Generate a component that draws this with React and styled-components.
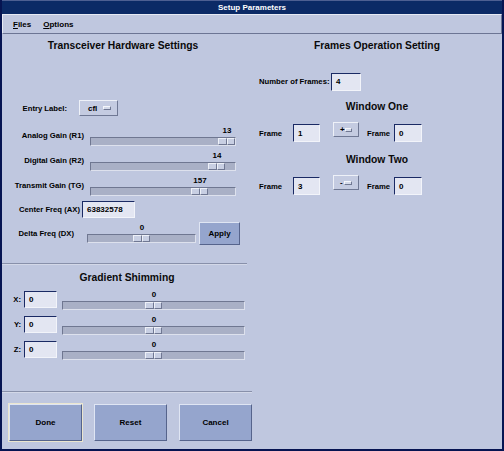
import React from "react";
import styled, { createGlobalStyle } from "styled-components";

const Global = createGlobalStyle`
  html, body { margin: 0; padding: 0; background: #bfc7df; }
  * { box-sizing: border-box; }
  body { font-family: "Liberation Sans", Arial, sans-serif; }
`;

const Window = styled.div`
  width: 504px;
  height: 451px;
  display: flex;
  flex-direction: column;
  background: #bfc7df;
  border: 2px solid #061452;
  border-top: none;
  overflow: hidden;
`;

const TitleBar = styled.div`
  height: 14px;
  flex: none;
  background: #0b2a66;
  border-top: 1px solid #4d5f92;
  color: #fff;
  font-size: 8px;
  font-weight: bold;
  line-height: 13px;
  text-align: center;
`;

const MenuBar = styled.div`
  height: 20px;
  flex: none;
  display: flex;
  align-items: center;
  gap: 12px;
  padding-left: 10px;
  border-top: 1px solid #e6eaf4;
  border-left: 1px solid #e6eaf4;
  border-bottom: 1px solid #6c7594;
  border-right: 1px solid #6c7594;
`;

const MenuItem = styled.span`
  font-size: 8px;
  font-weight: bold;
  color: #000;
`;

const Mnemonic = styled.span`
  text-decoration: underline;
`;

const Body = styled.div`
  flex: 1;
  display: flex;
`;

const Column = styled.div`
  width: 250px;
  flex: none;
  display: flex;
  flex-direction: column;
`;

const Section = styled.div`
  height: ${(p) => p.$h}px;
  flex: none;
  display: flex;
  flex-direction: column;
`;

const Heading = styled.div`
  margin-top: ${(p) => p.$mt || 0}px;
  padding-right: ${(p) => p.$pr || 0}px;
  font-size: 10.3px;
  font-weight: bold;
  line-height: 13px;
  text-align: center;
  color: #0a0a0a;
`;

const Row = styled.div`
  height: ${(p) => p.$h}px;
  margin-top: ${(p) => p.$mt || 0}px;
  padding-left: ${(p) => p.$pl || 0}px;
  flex: none;
  display: flex;
  align-items: center;
`;

const Label = styled.span`
  width: ${(p) => (p.$w ? `${p.$w}px` : "auto")};
  margin-right: ${(p) => p.$gap || 0}px;
  flex: none;
  text-align: ${(p) => (p.$w ? "right" : "left")};
  font-size: 7.7px;
  font-weight: bold;
  color: #000;
  white-space: nowrap;
`;

const Entry = styled.div`
  width: ${(p) => p.$w}px;
  height: ${(p) => p.$h || 17}px;
  margin-right: ${(p) => p.$gap || 0}px;
  flex: none;
  display: flex;
  align-items: center;
  padding-left: 4px;
  background: #e3e6f2;
  border-top: 1px solid #1a2a64;
  border-left: 1px solid #1a2a64;
  border-bottom: 1px solid #f2f4fa;
  border-right: 1px solid #f2f4fa;
  font-size: 8px;
  font-weight: bold;
  color: #000;
`;

const OptionMenu = styled.div`
  width: ${(p) => p.$w}px;
  height: ${(p) => p.$h}px;
  margin-right: ${(p) => p.$gap || 0}px;
  align-self: ${(p) => (p.$top ? "flex-start" : "center")};
  margin-top: ${(p) => p.$mt || 0}px;
  flex: none;
  display: flex;
  align-items: center;
  justify-content: space-between;
  padding: 0 6px 0 ${(p) => p.$pl || 8}px;
  background: #c4cbe1;
  border-top: 1px solid #eef1f8;
  border-left: 1px solid #eef1f8;
  border-bottom: 1px solid #6f7894;
  border-right: 1px solid #6f7894;
  font-size: 8px;
  font-weight: bold;
  color: #000;
`;

const Indicator = styled.span`
  width: 8px;
  height: 4px;
  background: #d4daea;
  border-top: 1px solid #f4f6fb;
  border-left: 1px solid #f4f6fb;
  border-bottom: 1px solid #707893;
  border-right: 1px solid #707893;
`;

const ScaleWrap = styled.div`
  width: ${(p) => p.$w}px;
  flex: none;
  display: flex;
  flex-direction: column;
`;

const ScaleValue = styled.div`
  position: relative;
  height: 9px;
  margin-bottom: 2px;
`;

const ValueText = styled.span`
  position: absolute;
  top: 0;
  transform: translateX(-50%);
  font-size: 8px;
  font-weight: bold;
  line-height: 9px;
  color: #000;
`;

const Trough = styled.div`
  position: relative;
  height: 9px;
  background: #a9b0c6;
  border-top: 1px solid #6f7791;
  border-left: 1px solid #6f7791;
  border-bottom: 1px solid #dde1ed;
  border-right: 1px solid #dde1ed;
`;

const Thumb = styled.div`
  position: absolute;
  top: 0;
  display: flex;
  width: 17px;
  height: 7px;
`;

const ThumbHalf = styled.span`
  flex: 1;
  background: #c8cfe3;
  border-top: 1px solid #eef1f8;
  border-left: 1px solid #eef1f8;
  border-bottom: 1px solid #6f7792;
  border-right: 1px solid #6f7792;
`;

const Divider = styled.div`
  width: ${(p) => p.$w}px;
  height: 2px;
  flex: none;
  border-top: 1px solid #8890aa;
  border-bottom: 1px solid #d3d8e8;
`;

const ButtonRow = styled.div`
  display: flex;
  gap: 12px;
  padding: 11px 0 0 7px;
`;

const PushButton = styled.button`
  width: ${(p) => p.$w}px;
  height: ${(p) => p.$h}px;
  margin-left: ${(p) => p.$ml || 0}px;
  flex: none;
  padding: 0;
  background: #95a5cd;
  border-top: 1px solid #dfe5f3;
  border-left: 1px solid #dfe5f3;
  border-bottom: 1px solid #56648c;
  border-right: 1px solid #56648c;
  outline: ${(p) => (p.$default ? "1px solid #ebe6cf" : "none")};
  font-family: "Liberation Sans", Arial, sans-serif;
  font-size: 8px;
  font-weight: bold;
  color: #000;
`;

function Scale({ width, value, at }) {
  return (
    <ScaleWrap $w={width}>
      <ScaleValue>
        <ValueText style={{ left: at + 10 }}>{value}</ValueText>
      </ScaleValue>
      <Trough>
        <Thumb style={{ left: at }}>
          <ThumbHalf />
          <ThumbHalf />
        </Thumb>
      </Trough>
    </ScaleWrap>
  );
}

const gains = [
  { label: "Analog Gain (R1)", value: 13, at: 127, mt: 3 },
  { label: "Digital Gain (R2)", value: 14, at: 117 },
  { label: "Transmit Gain (TG)", value: 157, at: 100 },
];

const shims = ["X:", "Y:", "Z:"];

function FrameRow({ first, op, last, mt }) {
  return (
    <Row $h={18} $mt={mt} $pl={7}>
      <Label $w={23} $gap={11}>Frame</Label>
      <Entry $w={27} $h={18} $gap={13}>{first}</Entry>
      <OptionMenu $w={26} $h={15} $gap={8} $top $mt={-2} $pl={6}>
        {op}
        <Indicator />
      </OptionMenu>
      <Label $w={22} $gap={5}>Frame</Label>
      <Entry $w={28} $h={18}>{last}</Entry>
    </Row>
  );
}

export default function App() {
  return (
    <>
      <Global />
      <Window>
        <TitleBar>Setup Parameters</TitleBar>
        <MenuBar>
          <MenuItem>
            <Mnemonic>F</Mnemonic>iles
          </MenuItem>
          <MenuItem>
            <Mnemonic>O</Mnemonic>ptions
          </MenuItem>
        </MenuBar>
        <Body>
          <Column>
            <Section $h={229}>
              <Heading $mt={5} $pr={8}>Transceiver Hardware Settings</Heading>
              <Row $h={24} $mt={44}>
                <Label $w={65} $gap={12}>Entry Label:</Label>
                <OptionMenu $w={39} $h={16}>
                  cfl
                  <Indicator />
                </OptionMenu>
              </Row>
              {gains.map((g) => (
                <Row key={g.label} $h={25} $mt={g.mt}>
                  <Label $w={82} $gap={6}>{g.label}</Label>
                  <Scale width={146} value={g.value} at={g.at} />
                </Row>
              ))}
              <Row $h={22}>
                <Label $w={78} $gap={2}>Center Freq (AX)</Label>
                <Entry $w={53}>63832578</Entry>
              </Row>
              <Row $h={26}>
                <Label $w={72} $gap={13}>Delta Freq (DX)</Label>
                <Scale width={109} value={0} at={45} />
                <PushButton $w={41} $h={23} $ml={3}>Apply</PushButton>
              </Row>
            </Section>
            <Divider $w={245} />
            <Section $h={126}>
              <Heading $mt={6}>Gradient Shimming</Heading>
              <Row $h={3} />
              {shims.map((s) => (
                <Row key={s} $h={25} $pl={7}>
                  <Label $w={12} $gap={3}>{s}</Label>
                  <Entry $w={33} $gap={5}>0</Entry>
                  <Scale width={183} value={0} at={82} />
                </Row>
              ))}
            </Section>
            <Divider $w={250} />
            <ButtonRow>
              <PushButton $w={73} $h={37} $default>Done</PushButton>
              <PushButton $w={73} $h={37}>Reset</PushButton>
              <PushButton $w={73} $h={37}>Cancel</PushButton>
            </ButtonRow>
          </Column>
          <Column>
            <Heading $mt={5}>Frames Operation Setting</Heading>
            <Row $h={19} $mt={20} $pl={7}>
              <Label $w={70} $gap={2}>Number of Frames:</Label>
              <Entry $w={30} $h={18}>4</Entry>
            </Row>
            <Heading $mt={9}>Window One</Heading>
            <FrameRow first={1} op="+" last={0} mt={11} />
            <Heading $mt={11}>Window Two</Heading>
            <FrameRow first={3} op="-" last={0} mt={11} />
          </Column>
        </Body>
      </Window>
    </>
  );
}
